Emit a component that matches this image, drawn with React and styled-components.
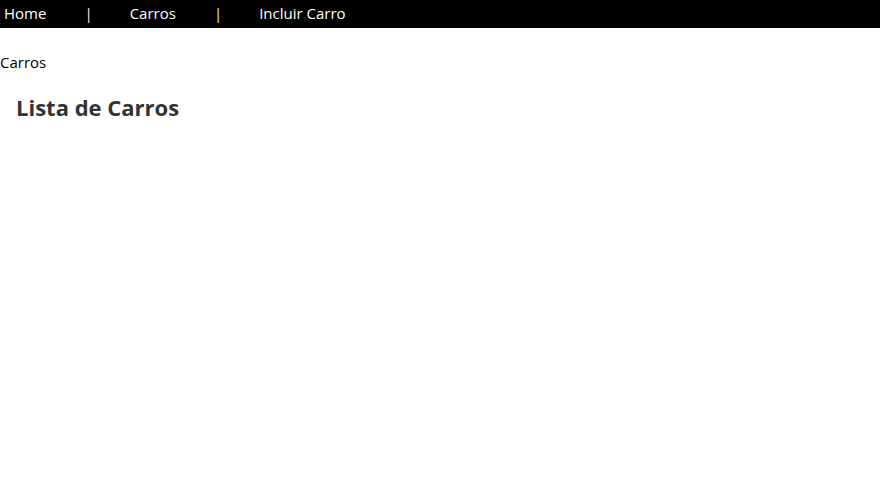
import React from 'react';
import styled, { createGlobalStyle } from 'styled-components';

const GlobalStyle = createGlobalStyle`
    body{
        margin:0;
        font-family:"Open Sans", "Noto Sans", sans-serif;
        font-size:16px;
        background:#fff;
    }
`

const NavBar = styled.nav`
    display:flex;
    align-items:center;
    height:28px;
    background-color:#000;
    padding-left:4px;
    padding-bottom:2px;
    box-sizing:border-box;
    a{
        color:#fff;
        text-decoration:none;
        font-size:15px;
    }
`

const Separator = styled.span`
    color:#fff5d6;
    margin:0 37px 0 38px;
    font-size:15px;
`

const Breadcrumb = styled.div`
    margin-top:24px;
    font-size:15px;
    color:#000;
`

const Title = styled.h2`
    margin:20px 0 0 16px;
    font-size:22px;
    font-weight:700;
    color:#333;
`

const App = () => {
    return (
        <>
        <GlobalStyle/>
        <NavBar>
            <a href='#home'>Home</a>
            <Separator>|</Separator>
            <a href='#carros'>Carros</a>
            <Separator>|</Separator>
            <a href='#incluir'>Incluir Carro</a>
        </NavBar>
        <Breadcrumb>Carros</Breadcrumb>
        <Title>Lista de Carros</Title>
        </>
    );
};

export default App;
